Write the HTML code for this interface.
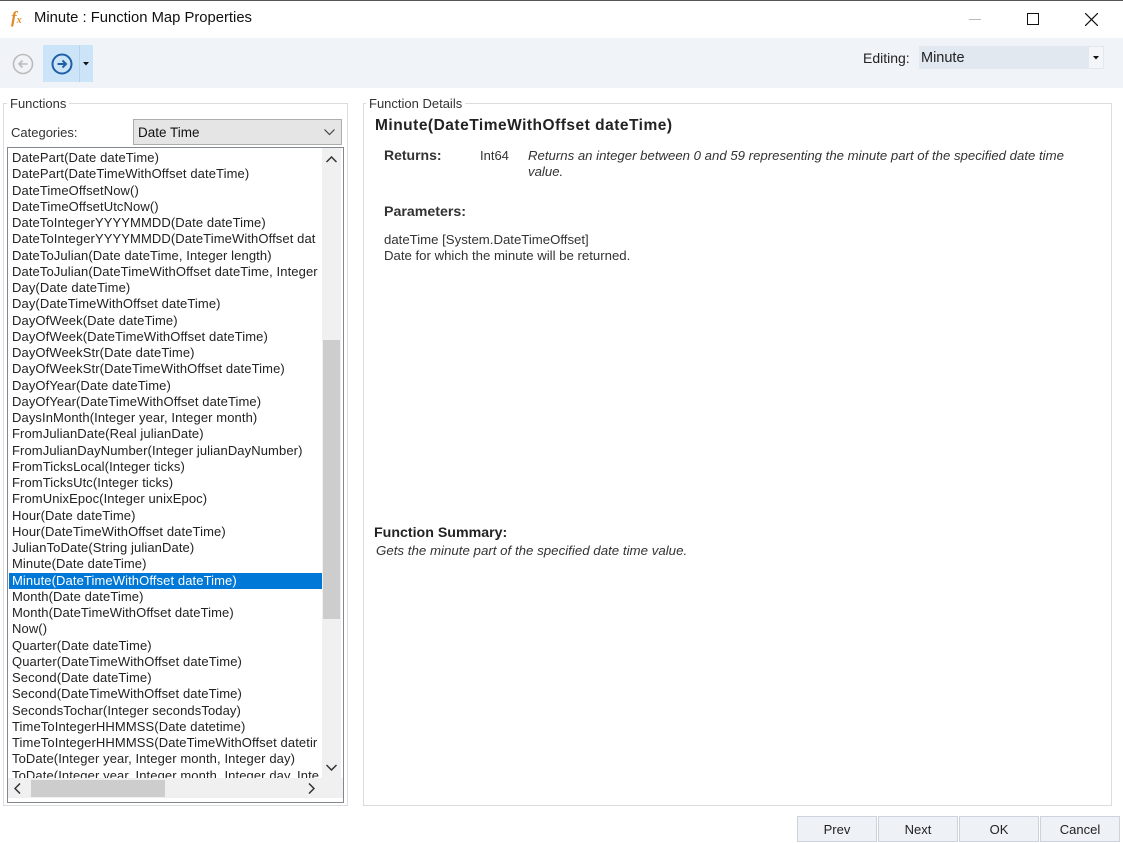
<!DOCTYPE html>
<html><head><meta charset="utf-8"><style>
*{margin:0;padding:0;box-sizing:border-box}
body{width:1123px;height:842px;background:#fff;font-family:"Liberation Sans",sans-serif;font-size:12px;color:#000;position:relative;overflow:hidden}
.a{position:absolute}
#tb{left:0;top:38px;width:1123px;height:50px;background:#f0f4f8}
.grp{border:1px solid #dcdcdc}
.leg{background:#fff;padding:0 3px;color:#333;font-size:13px}
#list{left:7px;top:147px;width:337px;height:656px;border:1px solid #828790;background:#fff;overflow:hidden}
#items{position:absolute;left:4px;top:2px;width:310px;white-space:nowrap;letter-spacing:0.1px;font-size:13px;color:#222}
#items div{height:16.25px;line-height:16.25px}
#items div.sel{background:#0078d7;color:#fff;margin-left:-3px;padding-left:3px;width:313px}
.btn{top:816px;width:80px;height:26px;background:#eef2f7;border:1px solid #ccd3dc;text-align:center;line-height:26px;font-size:13px;color:#222}
</style></head><body>
<div class="a" style="left:0;top:0;width:1123px;height:1px;background:#555"></div>
<div class="a" style="left:11px;top:8px;font-family:'Liberation Serif',serif;font-style:italic;font-weight:bold;color:#e08a2a;font-size:17px">f<span style="font-size:10px">x</span></div>
<div class="a" style="left:34px;top:10px;font-size:14.8px;color:#111">Minute : Function Map Properties</div>
<div class="a" style="left:969px;top:19px;width:12px;height:1px;background:#bbb"></div>
<div class="a" style="left:1027px;top:13px;width:12px;height:12px;border:1px solid #111"></div>
<svg class="a" style="left:1085px;top:13px" width="13" height="13"><path d="M0 0L13 13M13 0L0 13" stroke="#111" stroke-width="1.2"/></svg>
<div class="a" id="tb"></div>
<svg class="a" style="left:12px;top:53px" width="22" height="22"><circle cx="11" cy="11" r="9.5" fill="none" stroke="#bbb" stroke-width="1.6"/><path d="M15.5 11H7M10.5 7.5L7 11L10.5 14.5" fill="none" stroke="#bbb" stroke-width="1.6"/></svg>
<div class="a" style="left:43px;top:45px;width:50px;height:37px;background:#cce4f7"></div>
<div class="a" style="left:79px;top:45px;width:1px;height:37px;background:#b5d3ec"></div>
<svg class="a" style="left:51px;top:53px" width="22" height="22"><circle cx="11" cy="11" r="9.5" fill="none" stroke="#1f5fa8" stroke-width="2"/><path d="M6.5 11H15M11.5 7.5L15 11L11.5 14.5" fill="none" stroke="#1f5fa8" stroke-width="2"/></svg>
<svg class="a" style="left:83px;top:62px" width="6" height="4"><path d="M0 0H6L3 3.5Z" fill="#111"/></svg>
<div class="a" style="left:863px;top:50px;font-size:14px;color:#222">Editing:</div>
<div class="a" style="left:919px;top:46px;width:185px;height:23px;background:#e1e8f0"></div>
<div class="a" style="left:1089px;top:47px;width:14px;height:21px;background:#f3f5f8"></div>
<div class="a" style="left:921px;top:50px;font-size:14.5px;color:#222">Minute</div>
<svg class="a" style="left:1093px;top:56px" width="6" height="4"><path d="M0 0H6L3 3.5Z" fill="#111"/></svg>

<div class="a grp" style="left:3px;top:103px;width:345px;height:703px"></div>
<div class="a leg" style="left:7px;top:96px">Functions</div>
<div class="a" style="left:11px;top:125px;font-size:13px;color:#333">Categories:</div>
<div class="a" style="left:133px;top:119px;width:209px;height:26px;background:#e5e5e5;border:1px solid #adadad"></div>
<div class="a" style="left:138px;top:125px;font-size:13.5px;color:#111">Date Time</div>
<svg class="a" style="left:324px;top:129px" width="11" height="7"><path d="M0.5 0.5L5.5 5.5L10.5 0.5" fill="none" stroke="#444" stroke-width="1.2"/></svg>

<div class="a" id="list">
<div id="items">
<div>DatePart(Date dateTime)</div>
<div>DatePart(DateTimeWithOffset dateTime)</div>
<div>DateTimeOffsetNow()</div>
<div>DateTimeOffsetUtcNow()</div>
<div>DateToIntegerYYYYMMDD(Date dateTime)</div>
<div>DateToIntegerYYYYMMDD(DateTimeWithOffset dat</div>
<div>DateToJulian(Date dateTime, Integer length)</div>
<div>DateToJulian(DateTimeWithOffset dateTime, Integer</div>
<div>Day(Date dateTime)</div>
<div>Day(DateTimeWithOffset dateTime)</div>
<div>DayOfWeek(Date dateTime)</div>
<div>DayOfWeek(DateTimeWithOffset dateTime)</div>
<div>DayOfWeekStr(Date dateTime)</div>
<div>DayOfWeekStr(DateTimeWithOffset dateTime)</div>
<div>DayOfYear(Date dateTime)</div>
<div>DayOfYear(DateTimeWithOffset dateTime)</div>
<div>DaysInMonth(Integer year, Integer month)</div>
<div>FromJulianDate(Real julianDate)</div>
<div>FromJulianDayNumber(Integer julianDayNumber)</div>
<div>FromTicksLocal(Integer ticks)</div>
<div>FromTicksUtc(Integer ticks)</div>
<div>FromUnixEpoc(Integer unixEpoc)</div>
<div>Hour(Date dateTime)</div>
<div>Hour(DateTimeWithOffset dateTime)</div>
<div>JulianToDate(String julianDate)</div>
<div>Minute(Date dateTime)</div>
<div class="sel">Minute(DateTimeWithOffset dateTime)</div>
<div>Month(Date dateTime)</div>
<div>Month(DateTimeWithOffset dateTime)</div>
<div>Now()</div>
<div>Quarter(Date dateTime)</div>
<div>Quarter(DateTimeWithOffset dateTime)</div>
<div>Second(Date dateTime)</div>
<div>Second(DateTimeWithOffset dateTime)</div>
<div>SecondsTochar(Integer secondsToday)</div>
<div>TimeToIntegerHHMMSS(Date datetime)</div>
<div>TimeToIntegerHHMMSS(DateTimeWithOffset datetir</div>
<div>ToDate(Integer year, Integer month, Integer day)</div>
<div>ToDate(Integer year, Integer month, Integer day, Inte</div>
</div>
<div class="a" style="left:314px;top:0;width:19px;height:630px;background:#f0f0f0"></div>
<div class="a" style="left:315px;top:192px;width:17px;height:279px;background:#cdcdcd"></div>
<svg class="a" style="left:318px;top:8px" width="11" height="7"><path d="M0.5 6L5.5 1L10.5 6" fill="none" stroke="#333" stroke-width="1.5"/></svg>
<svg class="a" style="left:318px;top:616px" width="11" height="7"><path d="M0.5 1L5.5 6L10.5 1" fill="none" stroke="#333" stroke-width="1.5"/></svg>
<div class="a" style="left:0;top:630px;width:335px;height:20px;background:#f0f0f0"></div>
<div class="a" style="left:23px;top:632px;width:134px;height:17px;background:#cdcdcd"></div>
<svg class="a" style="left:6px;top:635px" width="7" height="11"><path d="M6 0.5L1 5.5L6 10.5" fill="none" stroke="#333" stroke-width="1.5"/></svg>
<svg class="a" style="left:300px;top:635px" width="7" height="11"><path d="M1 0.5L6 5.5L1 10.5" fill="none" stroke="#333" stroke-width="1.5"/></svg>
</div>

<div class="a grp" style="left:363px;top:103px;width:749px;height:703px"></div>
<div class="a leg" style="left:366px;top:96px">Function Details</div>
<div class="a" style="left:375px;top:117px;font-size:15.5px;letter-spacing:0.5px;font-weight:bold;color:#222">Minute(DateTimeWithOffset dateTime)</div>
<div class="a" style="left:384px;top:147px;font-size:14px;font-weight:bold;color:#333">Returns:</div>
<div class="a" style="left:480px;top:148px;font-size:13px;color:#333">Int64</div>
<div class="a" style="left:528px;top:148px;width:550px;font-size:13.2px;font-style:italic;color:#333;line-height:16px">Returns an integer between 0 and 59 representing the minute part of the specified date time value.</div>
<div class="a" style="left:384px;top:204px;font-size:14.2px;font-weight:bold;color:#333">Parameters:</div>
<div class="a" style="left:384px;top:232px;font-size:13.2px;color:#333;line-height:16px">dateTime [System.DateTimeOffset]<br>Date for which the minute will be returned.</div>
<div class="a" style="left:374px;top:525px;font-size:14.2px;font-weight:bold;color:#222">Function Summary:</div>
<div class="a" style="left:376px;top:543px;font-size:13.3px;font-style:italic;color:#333">Gets the minute part of the specified date time value.</div>

<div class="a btn" style="left:797px">Prev</div>
<div class="a btn" style="left:878px">Next</div>
<div class="a btn" style="left:959px">OK</div>
<div class="a btn" style="left:1040px">Cancel</div>
</body></html>
